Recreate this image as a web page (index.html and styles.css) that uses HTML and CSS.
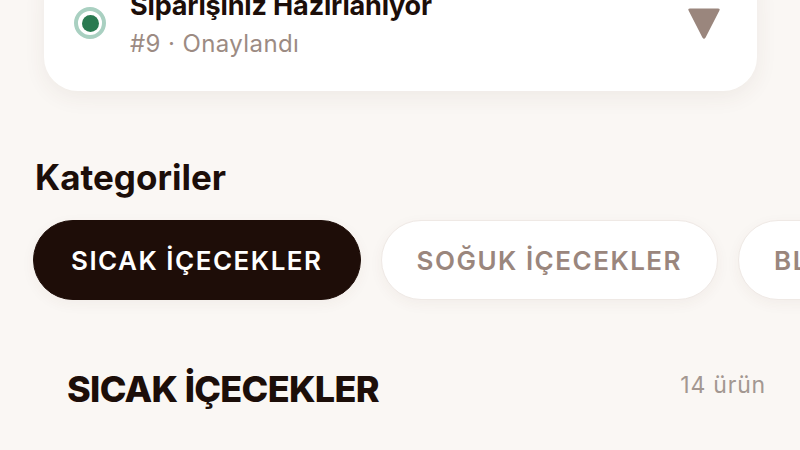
FILE: index.html
```html
<!DOCTYPE html>
<html lang="tr">
<head>
<meta charset="utf-8">
<link rel="stylesheet" href="styles.css">
</head>
<body>
<div class="page">
  <div class="order-card">
    <div class="status-dot"><span class="dot-inner"></span></div>
    <div class="order-text">
      <div class="order-title">Siparişiniz Hazırlanıyor</div>
      <div class="order-sub">#9 · Onaylandı</div>
    </div>
    <svg class="chevron" width="34" height="33" viewBox="0 0 34 33">
      <path d="M3 1.5 H31 Q33.5 1.5 32.3 3.8 L18.6 30.5 Q17 33 15.4 30.5 L1.7 3.8 Q0.5 1.5 3 1.5 Z" fill="#9a867d"/>
    </svg>
  </div>

  <h2 class="cat-title">Kategoriler</h2>
  <div class="chips">
    <div class="chip chip-active">SICAK İÇECEKLER</div>
    <div class="chip">SOĞUK İÇECEKLER</div>
    <div class="chip">BLENDED</div>
  </div>

  <div class="section-head">
    <h3 class="section-title">SICAK İÇECEKLER</h3>
    <span class="section-count">14 ürün</span>
  </div>
</div>
</body>
</html>
```

FILE: styles.css
```css
html, body {
  margin: 0;
  padding: 0;
  background: #faf7f4;
  width: 800px;
  height: 450px;
  overflow: hidden;
  font-family: Inter, "Noto Sans", sans-serif;
}
.page {
  display: flex;
  flex-direction: column;
}
.order-card {
  margin: -40px 43px 0 44px;
  padding: 30px 36px 33px 30px;
  background: #ffffff;
  border-radius: 34px;
  box-shadow: 0 6px 22px rgba(90, 60, 40, 0.07);
  display: flex;
  align-items: center;
}
.status-dot {
  width: 24px;
  height: 24px;
  border: 4px solid #a9d0c1;
  border-radius: 50%;
  display: flex;
  align-items: center;
  justify-content: center;
  flex: none;
  margin-top: -2px;
}
.dot-inner {
  width: 17px;
  height: 17px;
  background: #2a7a51;
  border-radius: 50%;
}
.order-text {
  margin-left: 24px;
  flex: 1;
  display: flex;
  flex-direction: column;
  gap: 8px;
}
.order-title {
  font-size: 27px;
  line-height: 32px;
  font-weight: 700;
  letter-spacing: -0.15px;
  color: #1c0e09;
}
.order-sub {
  font-size: 24px;
  line-height: 28px;
  font-weight: 400;
  letter-spacing: 0.4px;
  color: #9c8b83;
}
.chevron {
  flex: none;
  margin-top: -2px;
}
.cat-title {
  margin: 66px 0 0 35px;
  font-size: 35px;
  line-height: 40px;
  font-weight: 700;
  letter-spacing: 0;
  color: #1c0e09;
}
.chips {
  display: flex;
  gap: 20px;
  margin: 23px 0 0 33px;
  white-space: nowrap;
}
.chip {
  flex: none;
  height: 78px;
  padding: 0 35px;
  border-radius: 41px;
  background: #ffffff;
  border: 1.5px solid #efe9e5;
  box-shadow: 0 4px 14px rgba(90, 60, 40, 0.05);
  display: flex;
  align-items: center;
  font-size: 26px;
  font-weight: 600;
  letter-spacing: 1.5px;
  color: #9a867d;
}
.chip-active {
  padding: 0 37px;
  background: #1e0d08;
  border-color: #1e0d08;
  color: #ffffff;
}
.section-head {
  display: flex;
  justify-content: space-between;
  align-items: flex-start;
  margin: 67px 34px 0 67px;
}
.section-title {
  margin: 0;
  font-size: 36px;
  line-height: 44px;
  font-weight: 800;
  letter-spacing: -0.7px;
  color: #1c0e09;
}
.section-count {
  margin-top: 4px;
  font-size: 23px;
  line-height: 28px;
  font-weight: 400;
  letter-spacing: 0.8px;
  color: #a39791;
}
```
